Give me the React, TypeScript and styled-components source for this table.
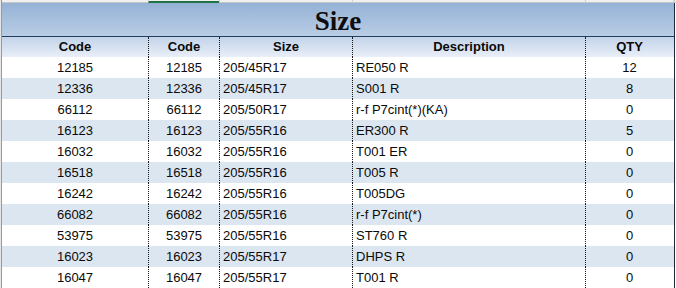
import React from "react";
import styled, { createGlobalStyle } from "styled-components";

const GlobalStyle = createGlobalStyle`
  html, body {
    margin: 0;
    padding: 0;
    background: #ffffff;
    overflow: hidden;
  }
  body {
    font-family: "Liberation Sans", Arial, sans-serif;
  }
`;

const COLS = "146px 71px 133px 233px 88px";

const Sheet = styled.div`
  display: flex;
  width: 676px;
  height: 288px;
  overflow: hidden;
`;

const Gutter = styled.div`
  width: 1px;
  background: #e6e6e6;
  border-right: 1px solid #9a9a9a;
  flex: none;
`;

const Main = styled.div`
  display: flex;
  flex-direction: column;
  flex: 1;
`;

const TopStrip = styled.div`
  display: grid;
  grid-template-columns: ${COLS} 1px 1fr;
  height: 5px;
  background: #f0f0f0;
`;

const StripCell = styled.div<{ $selected?: boolean; $first?: boolean }>`
  border-left: ${(p) => (p.$first ? "none" : "1px solid #cfcfcf")};
  border-bottom: ${(p) => (p.$selected ? "2px solid #217346" : "1px solid #c6c6c6")};
  box-sizing: border-box;
`;

const Table = styled.div`
  width: 672px;
  border-right: 1px solid #1c2a3c;
  font-size: 13px;
  color: #0a0a0a;
`;

const Title = styled.div`
  box-sizing: border-box;
  height: 34px;
  padding-top: 4px;
  border-bottom: 1px solid #243f60;
  background: linear-gradient(to bottom, #94b2d6, #b9cde4);
  text-align: center;
  font-family: "Liberation Serif", "Times New Roman", serif;
  font-weight: bold;
  font-size: 27px;
  line-height: 29px;
  color: #0d0d0d;
`;

const Row = styled.div<{ $alt?: boolean; $head?: boolean }>`
  display: grid;
  grid-template-columns: ${COLS};
  height: ${(p) => (p.$head ? "20px" : "21px")};
  line-height: ${(p) => (p.$head ? "20px" : "21px")};
  background: ${(p) =>
    p.$head
      ? "linear-gradient(to bottom, #c2d3e9, #e9eff8)"
      : p.$alt
      ? "#dce6f1"
      : "#ffffff"};
  font-weight: ${(p) => (p.$head ? "bold" : "normal")};
`;

const Cell = styled.div<{ $align?: "left" | "center"; $first?: boolean }>`
  box-sizing: border-box;
  border-left: ${(p) => (p.$first ? "none" : "1px dotted #1a1a1a")};
  text-align: ${(p) => p.$align || "center"};
  padding-left: ${(p) => (p.$align === "left" ? "3px" : "0")};
  white-space: nowrap;
  overflow: hidden;
`;

const rows = [
  ["12185", "12185", "205/45R17", "RE050 R", "12"],
  ["12336", "12336", "205/45R17", "S001 R", "8"],
  ["66112", "66112", "205/50R17", "r-f P7cint(*)(KA)", "0"],
  ["16123", "16123", "205/55R16", "ER300 R", "5"],
  ["16032", "16032", "205/55R16", "T001 ER", "0"],
  ["16518", "16518", "205/55R16", "T005 R", "0"],
  ["16242", "16242", "205/55R16", "T005DG", "0"],
  ["66082", "66082", "205/55R16", "r-f P7cint(*)", "0"],
  ["53975", "53975", "205/55R16", "ST760 R", "0"],
  ["16023", "16023", "205/55R17", "DHPS R", "0"],
  ["16047", "16047", "205/55R17", "T001 R", "0"],
];

export default function App() {
  return (
    <>
      <GlobalStyle />
      <Sheet>
        <Gutter />
        <Main>
          <TopStrip>
            <StripCell $first />
            <StripCell $selected />
            <StripCell />
            <StripCell />
            <StripCell />
            <StripCell />
            <StripCell />
          </TopStrip>
          <Table>
            <Title>Size</Title>
            <Row $head>
              <Cell $first>Code</Cell>
              <Cell>Code</Cell>
              <Cell>Size</Cell>
              <Cell>Description</Cell>
              <Cell>QTY</Cell>
            </Row>
            {rows.map((r, i) => (
              <Row key={i} $alt={i % 2 === 1}>
                <Cell $first>{r[0]}</Cell>
                <Cell>{r[1]}</Cell>
                <Cell $align="left">{r[2]}</Cell>
                <Cell $align="left">{r[3]}</Cell>
                <Cell>{r[4]}</Cell>
              </Row>
            ))}
          </Table>
        </Main>
      </Sheet>
    </>
  );
}
